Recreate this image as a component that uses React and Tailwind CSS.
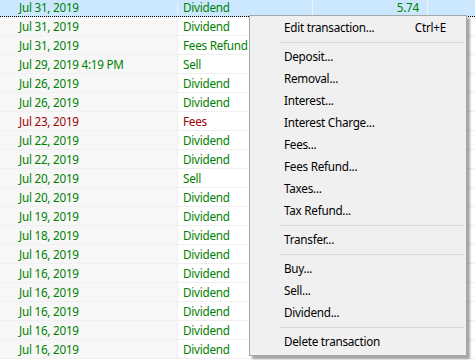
import React from "react";

const rows = [
  ["Jul 31, 2019", "Dividend", "g", "5.74"],
  ["Jul 31, 2019", "Dividend", "g"],
  ["Jul 31, 2019", "Fees Refund", "g"],
  ["Jul 29, 2019 4:19 PM", "Sell", "g"],
  ["Jul 26, 2019", "Dividend", "g"],
  ["Jul 26, 2019", "Dividend", "g"],
  ["Jul 23, 2019", "Fees", "r"],
  ["Jul 22, 2019", "Dividend", "g"],
  ["Jul 22, 2019", "Dividend", "g"],
  ["Jul 20, 2019", "Sell", "g"],
  ["Jul 20, 2019", "Dividend", "g"],
  ["Jul 19, 2019", "Dividend", "g"],
  ["Jul 18, 2019", "Dividend", "g"],
  ["Jul 16, 2019", "Dividend", "g"],
  ["Jul 16, 2019", "Dividend", "g"],
  ["Jul 16, 2019", "Dividend", "g"],
  ["Jul 16, 2019", "Dividend", "g"],
  ["Jul 16, 2019", "Dividend", "g"],
  ["Jul 16, 2019", "Dividend", "g"],
];

const menu = [
  ["Edit transaction...", "Ctrl+E"],
  "sep",
  ["Deposit..."],
  ["Removal..."],
  ["Interest..."],
  ["Interest Charge..."],
  ["Fees..."],
  ["Fees Refund..."],
  ["Taxes..."],
  ["Tax Refund..."],
  "sep",
  ["Transfer..."],
  "sep",
  ["Buy..."],
  ["Sell..."],
  ["Dividend..."],
  "sep",
  ["Delete transaction"],
];

export default function App() {
  return (
    <div
      className="relative w-[475px] h-[360px] overflow-hidden bg-white text-[11.7px] tracking-[-0.25px]"
      style={{ fontFamily: '"Noto Sans", "Liberation Sans", sans-serif' }}
    >
      <div className="flex flex-col">
        {rows.map((r, i) => {
          const sel = i === 0;
          const color = r[2] === "r" ? "text-[#a00000]" : "text-[#008000]";
          return (
            <div
              key={i}
              className={
                "flex border-b " +
                (sel
                  ? "h-[17px] leading-[14px] border-dotted border-black bg-[#cce8ff]"
                  : "h-[19px] leading-[19px] border-[#f0f0f0]")
              }
            >
              <div
                className={
                  "w-[178px] shrink-0 pl-[19px] border-r " +
                  (sel ? "border-[#e6f3ff]" : "bg-[#f7f7f7] border-[#f0f0f0]") +
                  " " + color
                }
              >
                {r[0]}
              </div>
              <div
                className={
                  "w-[135px] shrink-0 pl-[5px] border-r " +
                  (sel ? "border-[#e6f3ff]" : "border-[#f0f0f0]") +
                  " " + color
                }
              >
                {r[1]}
              </div>
              <div
                className={
                  "w-[115px] shrink-0 pr-[8px] text-right border-r " +
                  (sel ? "border-[#e6f3ff]" : "border-[#f0f0f0]") +
                  " " + color
                }
              >
                {r[3] || ""}
              </div>
              <div className="flex-1" />
            </div>
          );
        })}
      </div>

      <div className="absolute left-[249px] top-[15px] w-[218px] h-[341px] bg-[#f0f0f0] border border-[#a8a8a8] shadow-[3px_3px_2px_rgba(0,0,0,0.35)] pt-[1px] text-black">
        {menu.map((m, i) =>
          m === "sep" ? (
            <div key={i} className="h-[7px] flex items-center pl-[30px] pr-[2px]">
              <div className="h-px w-full bg-[#d7d7d7]" />
            </div>
          ) : (
            <div key={i} className="h-[22px] flex items-center pl-[34px] pr-[20px]">
              <span className="flex-1">{m[0]}</span>
              {m[1] && <span>{m[1]}</span>}
            </div>
          )
        )}
      </div>
    </div>
  );
}
